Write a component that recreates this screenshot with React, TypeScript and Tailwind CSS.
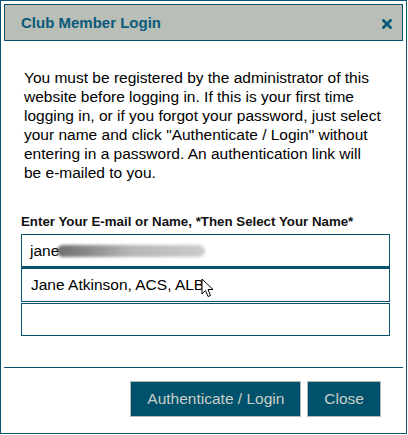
import React from 'react';

const teal = 'border-[#0a5370]';

function Pointer() {
  return (
    <svg width="14" height="20" viewBox="0 0 14 20" className="absolute left-[179px] top-[9px]">
      <path d="M1 1 L1 16 L4.5 12.5 L7 18.5 L9.5 17.5 L7 11.5 L12 11.5 Z" fill="#fff" stroke="#000" strokeWidth="1" strokeLinejoin="round" />
    </svg>
  );
}

export default function App() {
  return (
    <div className="w-[408px] h-[435px] bg-white" style={{ fontFamily: '"Liberation Sans", Arial, sans-serif' }}>
      <div className={`w-[407px] h-[434px] border ${teal} p-[3px] flex flex-col`}>
        <div className={`h-[37px] border ${teal} bg-[#b9bfb7] flex items-center justify-between pl-[16px] pr-[10px]`}>
          <span className="text-[15px] font-bold text-[#0b5a7b] mt-[2px]">Club Member Login</span>
          <svg width="10" height="10" viewBox="0 0 10 10" className="mt-[2px]">
            <path d="M1.5 1.5 L8.5 8.5 M8.5 1.5 L1.5 8.5" stroke="#0b5a7b" strokeWidth="2.8" strokeLinecap="square" />
          </svg>
        </div>

        <div className="px-[17px] pt-[27px]">
          <p className="pl-[3px] text-[15.5px] leading-[19px] text-black">
            You must be registered by the administrator of this website before logging in. If this is your first time logging in, or if you forgot your password, just select your name and click "Authenticate / Login" without entering in a password. An authentication link will
            <br />
            be e-mailed to you.
          </p>

          <div className="mt-[32px] text-[13.3px] font-bold text-[#111] leading-[16px]">
            Enter Your E-mail or Name, *Then Select Your Name*
          </div>

          <div className="mt-[4px] w-[369px]">
            <div className={`h-[33px] border ${teal} flex items-center pl-[8px] text-[15.5px] text-black relative`}>
              <span>jane</span>
              <span className="ml-[-2px] h-[12px] w-[148px] rounded-full bg-gradient-to-r from-[#4a4a4a] via-[#a5a5a5] to-[#c0c0c0] blur-[1.5px] opacity-80" />
            </div>
            <div className={`h-[35px] border ${teal} border-t-2 flex items-center pl-[9px] text-[15.5px] text-black relative`}>
              <span>Jane Atkinson, ACS, ALB</span>
              <Pointer />
            </div>
            <div className={`mt-[1px] h-[33px] border ${teal}`} />
          </div>
        </div>

        <div className={`mt-[31px] border-t ${teal}`} />

        <div className="flex justify-end gap-[6px] pr-[22px] pt-[13px]">
          <button className="h-[36px] px-[16px] bg-[#00526c] border border-[#b3bab2] text-[15.5px] text-[#c9cfc7]">
            Authenticate / Login
          </button>
          <button className="h-[36px] px-[16px] bg-[#00526c] border border-[#b3bab2] text-[15.5px] text-[#c9cfc7]">
            Close
          </button>
        </div>
      </div>
    </div>
  );
}
